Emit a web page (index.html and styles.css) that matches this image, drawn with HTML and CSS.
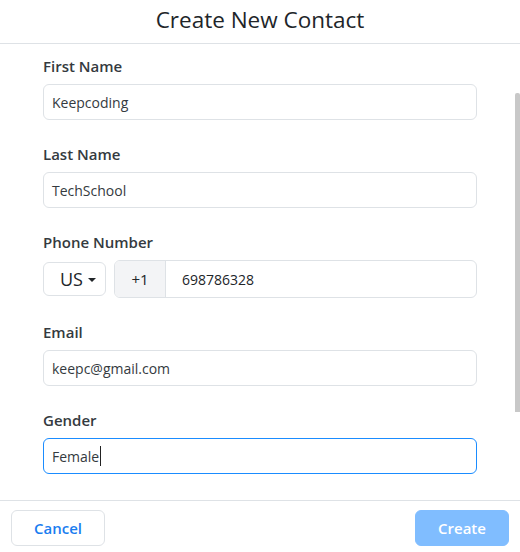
FILE: index.html
```html
<!DOCTYPE html>
<html>
<head>
<meta charset="utf-8">
<link rel="stylesheet" href="styles.css">
</head>
<body>
<div class="modal">
  <div class="modal-header">
    <h1 class="title">Create New Contact</h1>
  </div>
  <div class="modal-body">
    <div class="field">
      <div class="label">First Name</div>
      <div class="input">Keepcoding</div>
    </div>
    <div class="field">
      <div class="label">Last Name</div>
      <div class="input">TechSchool</div>
    </div>
    <div class="field">
      <div class="label">Phone Number</div>
      <div class="phone-row">
        <div class="country">US<span class="caret"></span></div>
        <div class="phone-group">
          <div class="addon">+1</div>
          <div class="phone-input">698786328</div>
        </div>
      </div>
    </div>
    <div class="field">
      <div class="label">Email</div>
      <div class="input">keepc@gmail.com</div>
    </div>
    <div class="field">
      <div class="label">Gender</div>
      <div class="input focused">Female<span class="text-caret"></span></div>
    </div>
    <div class="scroll-thumb"></div>
  </div>
  <div class="modal-footer">
    <button class="btn btn-cancel">Cancel</button>
    <button class="btn btn-create">Create</button>
  </div>
</div>
</body>
</html>
```
FILE: styles.css
```css
* { box-sizing: border-box; }
html, body {
  margin: 0;
  padding: 0;
  background: #fff;
}
body {
  font-family: "Open Sans", "Noto Sans", sans-serif;
  color: #212529;
}
.modal {
  width: 520px;
  height: 552px;
  display: flex;
  flex-direction: column;
  overflow: hidden;
}
.modal-header {
  flex-shrink: 0;
  height: 44px;
  border-bottom: 1px solid #dee2e6;
  display: flex;
  justify-content: center;
  align-items: flex-start;
}
.title {
  margin: 0;
  font-size: 22.5px;
  font-weight: 400;
  line-height: 40px;
  color: #212529;
}
.modal-body {
  position: relative;
  flex: 1;
  min-height: 0;
  overflow: hidden;
  padding: 12px 43px 0 43px;
}
.field {
  margin-bottom: 24px;
}
.label {
  font-size: 15px;
  font-weight: 600;
  line-height: 21px;
  color: #343a40;
  margin-bottom: 7px;
}
.input {
  height: 36px;
  border: 1px solid #dee2e6;
  border-radius: 6px;
  padding: 0 8px;
  display: flex;
  align-items: center;
  font-size: 14px;
  color: #343a40;
}
.input.focused {
  border-color: #1a8cff;
}
.text-caret {
  display: inline-block;
  width: 1px;
  height: 20px;
  background: #222;
  margin-left: 1px;
}
.phone-row {
  display: flex;
  align-items: center;
  gap: 8px;
  height: 38px;
}
.country {
  width: 63px;
  height: 34px;
  border: 1px solid #dee2e6;
  border-radius: 6px;
  display: flex;
  align-items: center;
  padding-left: 16px;
  font-size: 18px;
  color: #212529;
}
.caret {
  display: inline-block;
  width: 0;
  height: 0;
  border-left: 4px solid transparent;
  border-right: 4px solid transparent;
  border-top: 4px solid #212529;
  margin-left: 5px;
  margin-top: 1px;
}
.phone-group {
  flex: 1;
  height: 38px;
  display: flex;
  border: 1px solid #dee2e6;
  border-radius: 6px;
  overflow: hidden;
}
.addon {
  width: 51px;
  background: #f3f4f6;
  border-right: 1px solid #dee2e6;
  display: flex;
  align-items: center;
  justify-content: center;
  font-size: 15px;
  color: #212529;
}
.phone-input {
  flex: 1;
  display: flex;
  align-items: center;
  padding-left: 16px;
  font-size: 14px;
  color: #212529;
}
.scroll-thumb {
  position: absolute;
  right: 0;
  top: 49px;
  width: 5px;
  height: 319px;
  background: #c8c8c8;
  border-radius: 2px 2px 0 0;
}
.modal-footer {
  flex-shrink: 0;
  border-top: 1px solid #dee2e6;
  height: 52px;
  padding: 9px 11px 0 11px;
  display: flex;
  justify-content: space-between;
  align-items: flex-start;
}
.btn {
  width: 94px;
  height: 36px;
  border-radius: 6px;
  font-family: "Open Sans", "Noto Sans", sans-serif;
  font-size: 15px;
  font-weight: 600;
  cursor: pointer;
}
.btn-cancel {
  background: #fff;
  border: 1px solid #dee2e6;
  color: #1a7df0;
}
.btn-create {
  background: #80bdff;
  border: 1px solid #80bdff;
  color: #fff;
}
```
